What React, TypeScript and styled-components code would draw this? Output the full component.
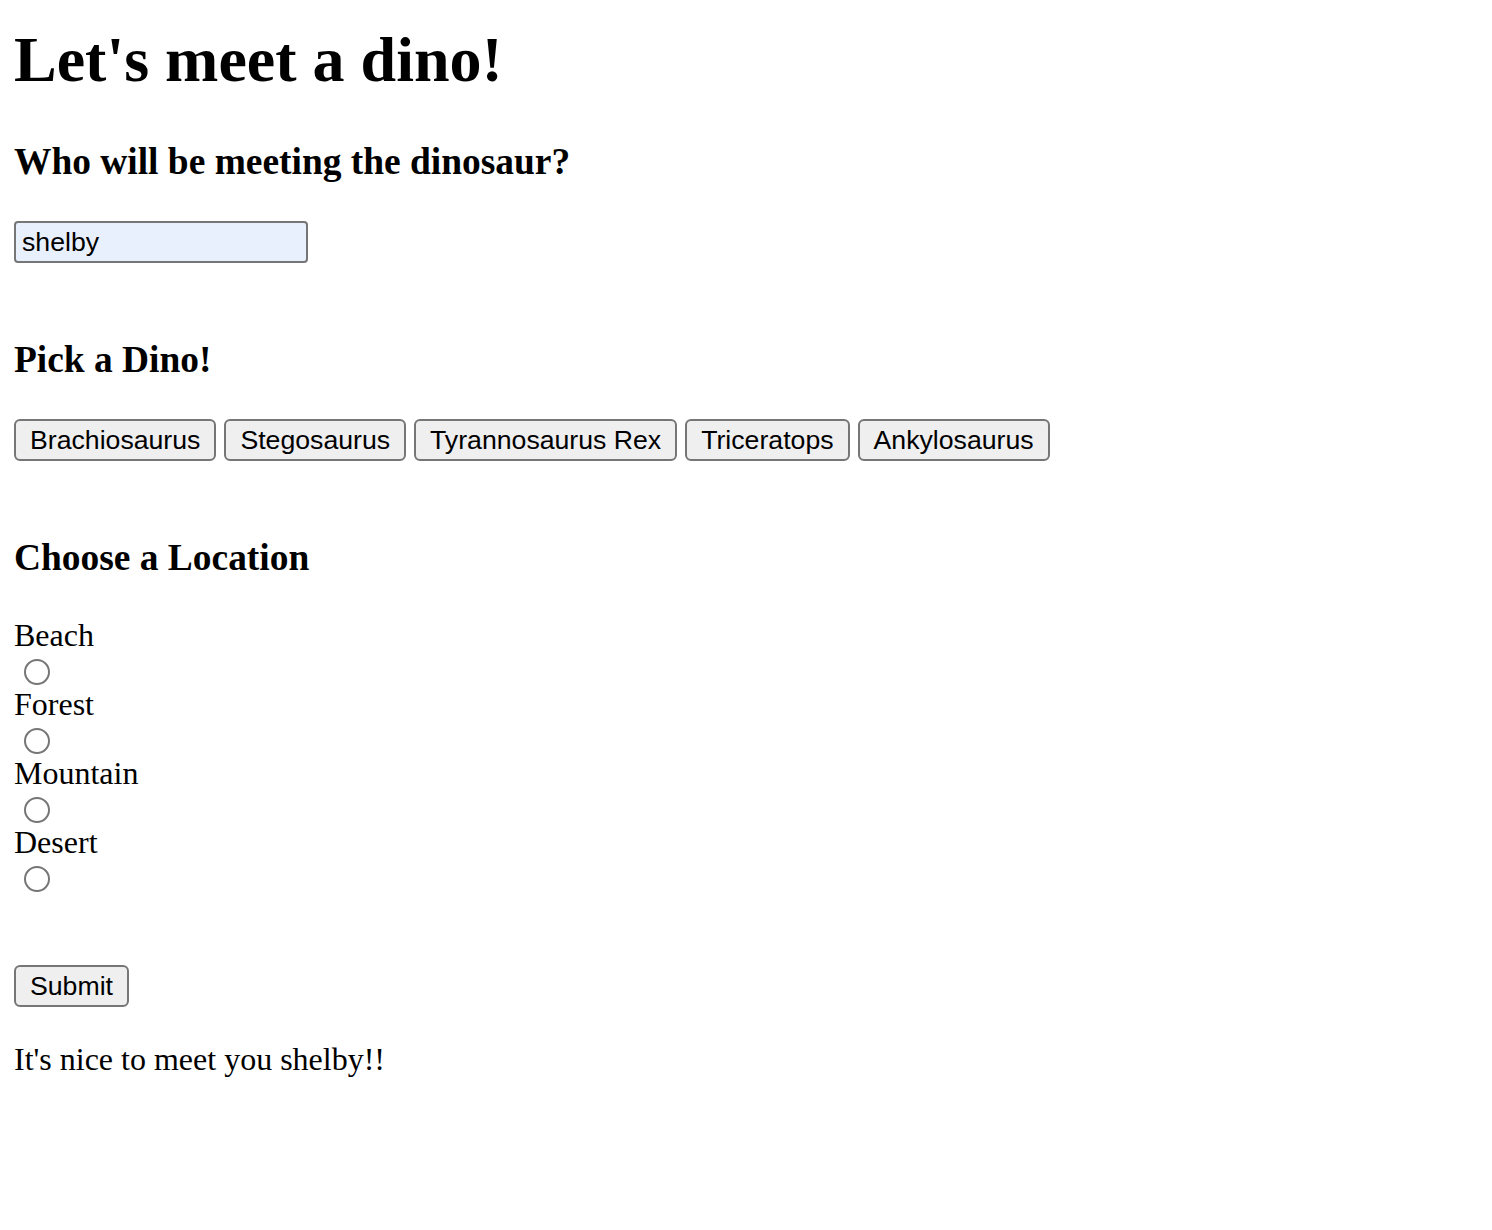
import styled, { createGlobalStyle } from "styled-components";

const GlobalStyle = createGlobalStyle`
  html, body {
    margin: 0;
    background: #fff;
    color: #000;
  }
  body {
    font-family: "Liberation Serif", "Times New Roman", serif;
    font-size: 32px;
  }
`;

const Page = styled.div`
  padding: 0 14px;
`;

const Title = styled.h1`
  margin: 23px 0 0;
  font-size: 64px;
  line-height: 74px;
  font-weight: bold;
`;

const Section = styled.section<{ $gap: number }>`
  margin-top: ${(p) => p.$gap}px;
`;

const Heading = styled.h3<{ $below?: number }>`
  margin: 0 0 ${(p) => p.$below ?? 38}px;
  font-size: 37.44px;
  line-height: 43px;
  font-weight: bold;
`;

const NameInput = styled.input`
  display: block;
  box-sizing: border-box;
  width: 294px;
  height: 42px;
  margin: 0;
  padding: 0 6px;
  border: 2px solid #767676;
  border-radius: 4px;
  background: #e8f0fe;
  font-family: "Liberation Sans", Arial, sans-serif;
  font-size: 26.67px;
  color: #000;
  outline: none;
`;

const ButtonRow = styled.div`
  display: flex;
  gap: 8px;
`;

const Button = styled.button`
  box-sizing: border-box;
  height: 42px;
  margin: 0;
  padding: 0 14px;
  border: 2px solid #767676;
  border-radius: 6px;
  background: #efefef;
  font-family: "Liberation Sans", Arial, sans-serif;
  font-size: 26.67px;
  color: #000;
  cursor: pointer;
`;

const Option = styled.label`
  display: block;
  height: 69px;
`;

const OptionText = styled.span`
  display: block;
  line-height: 37px;
`;

const RadioRow = styled.span`
  display: block;
  padding-top: 5px;
  height: 27px;
`;

const Radio = styled.input`
  appearance: none;
  display: block;
  box-sizing: border-box;
  width: 26px;
  height: 26px;
  margin: 0 0 0 10px;
  border: 2px solid #767676;
  border-radius: 50%;
  background: #fff;
`;

const Message = styled.p`
  margin: 34px 0 0;
  line-height: 37px;
`;

const dinos = [
  "Brachiosaurus",
  "Stegosaurus",
  "Tyrannosaurus Rex",
  "Triceratops",
  "Ankylosaurus",
];

const locations = ["Beach", "Forest", "Mountain", "Desert"];

export default function App() {
  return (
    <Page>
      <GlobalStyle />
      <Title>Let's meet a dino!</Title>
      <form onSubmit={(e) => e.preventDefault()}>
        <Section $gap={43}>
          <Heading>Who will be meeting the dinosaur?</Heading>
          <NameInput type="text" defaultValue="shelby" />
        </Section>
        <Section $gap={75}>
          <Heading>Pick a Dino!</Heading>
          <ButtonRow>
            {dinos.map((d) => (
              <Button type="button" key={d}>
                {d}
              </Button>
            ))}
          </ButtonRow>
        </Section>
        <Section $gap={75}>
          <Heading>Choose a Location</Heading>
          {locations.map((l) => (
            <Option key={l}>
              <OptionText>{l}</OptionText>
              <RadioRow>
                <Radio type="radio" name="location" value={l} />
              </RadioRow>
            </Option>
          ))}
        </Section>
        <Section $gap={72}>
          <Button type="submit">Submit</Button>
        </Section>
      </form>
      <Message>It's nice to meet you shelby!!</Message>
    </Page>
  );
}
